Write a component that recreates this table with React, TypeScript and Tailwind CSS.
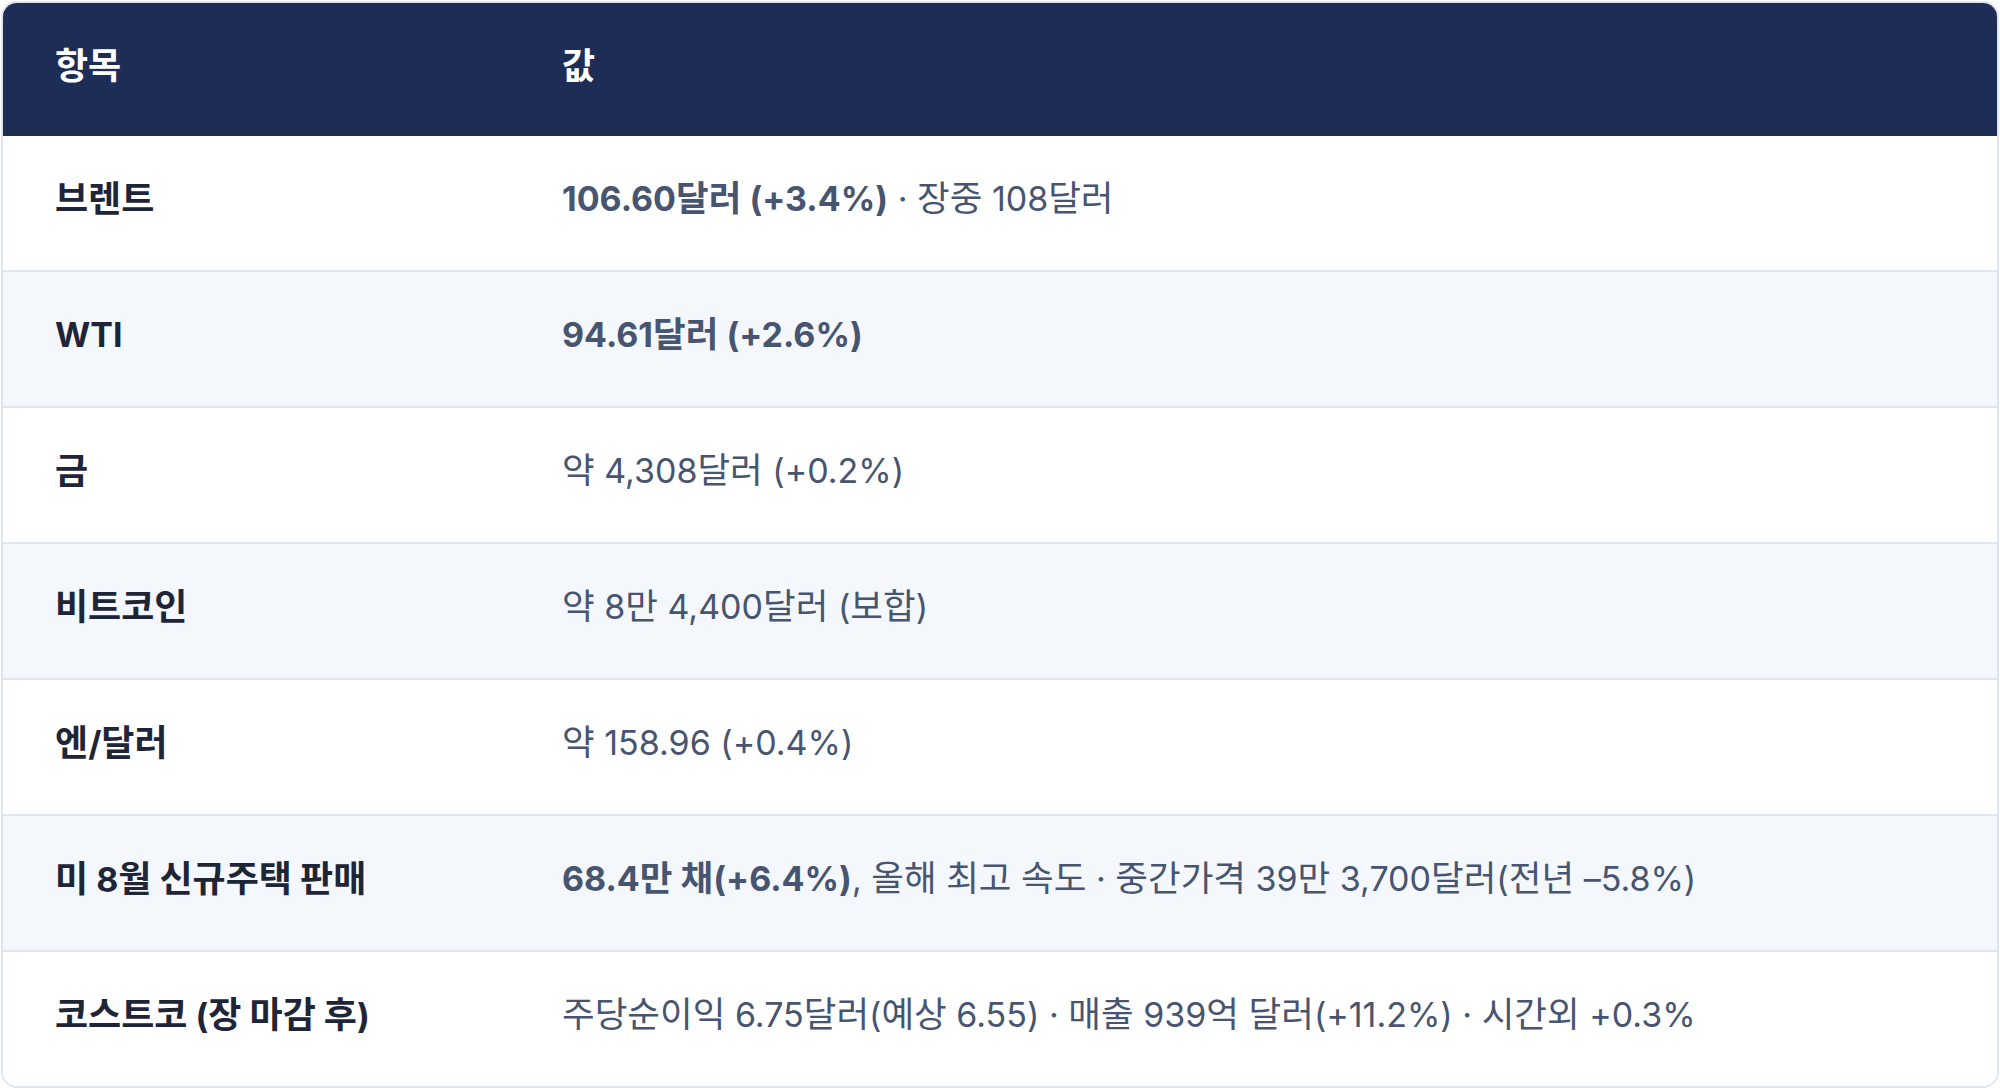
import React from "react";

// Hangul runs are drawn a touch larger than the Latin parts, like the reference font
function K({ children, big = false }: { children: string; big?: boolean }) {
  const parts = children.split(/([가-힣]+)/);
  return (
    <>
      {parts.map((p, i) =>
        /[가-힣]/.test(p) ? (
          <span key={i} className={big ? "text-[36px]" : "text-[35.5px]"}>
            {p}
          </span>
        ) : (
          <React.Fragment key={i}>{p}</React.Fragment>
        )
      )}
    </>
  );
}

type Row = {
  label: string;
  value: React.ReactNode;
};

const rows: Row[] = [
  {
    label: "브렌트",
    value: (
      <>
        <b className="font-bold">
          <K>106.60달러 (+3.4%)</K>
        </b>
        <K> · 장중 108달러</K>
      </>
    ),
  },
  {
    label: "WTI",
    value: (
      <b className="font-bold">
        <K>94.61달러 (+2.6%)</K>
      </b>
    ),
  },
  { label: "금", value: <K>약 4,308달러 (+0.2%)</K> },
  { label: "비트코인", value: <K>약 8만 4,400달러 (보합)</K> },
  { label: "엔/달러", value: <K>약 158.96 (+0.4%)</K> },
  {
    label: "미 8월 신규주택 판매",
    value: (
      <>
        <b className="font-bold">
          <K>68.4만 채(+6.4%)</K>
        </b>
        <K>, 올해 최고 속도 · 중간가격 39만 3,700달러(전년 –5.8%)</K>
      </>
    ),
  },
  {
    label: "코스트코 (장 마감 후)",
    value: <K>주당순이익 6.75달러(예상 6.55) · 매출 939억 달러(+11.2%) · 시간외 +0.3%</K>,
  },
];

export default function App() {
  return (
    <div
      className="w-[2000px] h-[1090px] bg-white p-px"
      style={{ fontFamily: 'Inter, "Noto Sans CJK KR", "Noto Sans", sans-serif' }}
    >
      <div className="rounded-2xl border-2 border-[#dee4f1] overflow-hidden">
        {/* Header */}
        <div className="grid grid-cols-[507px_1fr] h-[133px] pb-2 bg-[#1e2d55] text-white text-[34px] font-bold items-center">
          <div className="pl-[52px]">
            <K big>항목</K>
          </div>
          <div className="pl-[52px]">
            <K big>값</K>
          </div>
        </div>

        {/* Rows */}
        {rows.map((row, i) => (
          <div
            key={row.label}
            className={`grid grid-cols-[507px_1fr] items-center pb-2 text-[34px] leading-none ${
              i % 2 === 1 ? "bg-[#f4f7fc]" : "bg-white"
            } ${i < rows.length - 1 ? "h-[136px] border-b-2 border-[#dee4f1]" : "h-[134px]"}`}
          >
            <div className="pl-[52px] font-bold text-[#1e2537]">
              <K big>{row.label}</K>
            </div>
            <div className="pl-[52px] text-[#475570]">{row.value}</div>
          </div>
        ))}
      </div>
    </div>
  );
}
